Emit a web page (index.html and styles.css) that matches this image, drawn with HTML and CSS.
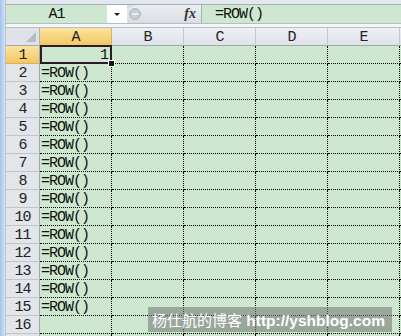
FILE: index.html
```html
<!DOCTYPE html>
<html lang="zh-CN">

<head>
    <title>ROW</title>
    <meta charset="UTF-8">
    <link rel="stylesheet" href="styles.css">
</head>

<body>
    <div class="window">
        <div class="frame-edge"></div>
        <div class="workbook">
            <div class="top-band"></div>
            <div class="formula-bar">
                <div class="name-box">A1</div>
                <div class="name-drop"><span class="caret"></span></div>
                <div class="bar-tools">
                    <span class="grip"><span class="grip-dot"></span></span>
                    <span class="fx">fx</span>
                </div>
                <div class="formula-input">=ROW()</div>
            </div>
            <div class="bar-gap"></div>

            <div class="sheet">
                <div class="corner"></div>
                <div class="col-head active">A</div>
                <div class="col-head">B</div>
                <div class="col-head">C</div>
                <div class="col-head">D</div>
                <div class="col-head">E</div>
                <div class="col-head rest"></div>

                <div class="row-head active">1</div>
                <div class="cell num selected">1</div>
                <div class="cell"></div><div class="cell"></div><div class="cell"></div><div class="cell"></div><div class="cell rest"></div>

                <div class="row-head">2</div>
                <div class="cell">=ROW()</div>
                <div class="cell"></div><div class="cell"></div><div class="cell"></div><div class="cell"></div><div class="cell rest"></div>

                <div class="row-head">3</div>
                <div class="cell">=ROW()</div>
                <div class="cell"></div><div class="cell"></div><div class="cell"></div><div class="cell"></div><div class="cell rest"></div>

                <div class="row-head">4</div>
                <div class="cell">=ROW()</div>
                <div class="cell"></div><div class="cell"></div><div class="cell"></div><div class="cell"></div><div class="cell rest"></div>

                <div class="row-head">5</div>
                <div class="cell">=ROW()</div>
                <div class="cell"></div><div class="cell"></div><div class="cell"></div><div class="cell"></div><div class="cell rest"></div>

                <div class="row-head">6</div>
                <div class="cell">=ROW()</div>
                <div class="cell"></div><div class="cell"></div><div class="cell"></div><div class="cell"></div><div class="cell rest"></div>

                <div class="row-head">7</div>
                <div class="cell">=ROW()</div>
                <div class="cell"></div><div class="cell"></div><div class="cell"></div><div class="cell"></div><div class="cell rest"></div>

                <div class="row-head">8</div>
                <div class="cell">=ROW()</div>
                <div class="cell"></div><div class="cell"></div><div class="cell"></div><div class="cell"></div><div class="cell rest"></div>

                <div class="row-head">9</div>
                <div class="cell">=ROW()</div>
                <div class="cell"></div><div class="cell"></div><div class="cell"></div><div class="cell"></div><div class="cell rest"></div>

                <div class="row-head">10</div>
                <div class="cell">=ROW()</div>
                <div class="cell"></div><div class="cell"></div><div class="cell"></div><div class="cell"></div><div class="cell rest"></div>

                <div class="row-head">11</div>
                <div class="cell">=ROW()</div>
                <div class="cell"></div><div class="cell"></div><div class="cell"></div><div class="cell"></div><div class="cell rest"></div>

                <div class="row-head">12</div>
                <div class="cell">=ROW()</div>
                <div class="cell"></div><div class="cell"></div><div class="cell"></div><div class="cell"></div><div class="cell rest"></div>

                <div class="row-head">13</div>
                <div class="cell">=ROW()</div>
                <div class="cell"></div><div class="cell"></div><div class="cell"></div><div class="cell"></div><div class="cell rest"></div>

                <div class="row-head">14</div>
                <div class="cell">=ROW()</div>
                <div class="cell"></div><div class="cell"></div><div class="cell"></div><div class="cell"></div><div class="cell rest"></div>

                <div class="row-head">15</div>
                <div class="cell">=ROW()</div>
                <div class="cell"></div><div class="cell"></div><div class="cell"></div><div class="cell"></div><div class="cell rest"></div>

                <div class="row-head">16</div>
                <div class="cell"></div>
                <div class="cell"></div><div class="cell"></div><div class="cell"></div><div class="cell"></div><div class="cell rest"></div>

                <div class="row-head"></div>
                <div class="cell"></div>
                <div class="cell"></div><div class="cell"></div><div class="cell"></div><div class="cell"></div><div class="cell rest"></div>
            </div>
        </div>

        <div class="watermark"><span class="wm-name">杨仕航的博客</span> <span class="wm-url">http://yshblog.com</span></div>
    </div>
</body>

</html>
```

FILE: styles.css
```css
body {
    margin: 0;
    overflow: hidden;
    background: #cde8cf;
    font-family: "Liberation Mono", "Courier New", monospace;
}

.window {
    position: relative;
    display: flex;
    width: 401px;
    height: 336px;
    overflow: hidden;
}

.frame-edge {
    width: 6px;
    flex: none;
    background: linear-gradient(to right, #a4c2ea, #d3e2f5);
    border-right: 1px solid #b6c3d3;
    box-sizing: border-box;
}

.workbook {
    flex: 1;
    min-width: 0;
}

.top-band {
    height: 4px;
    background: #e3e8ee;
}

.formula-bar {
    display: grid;
    grid-template-columns: 101px 20px 75px 1fr;
    height: 20px;
    border-top: 1px solid #a3acb7;
    border-bottom: 1px solid #b4bcc6;
    box-sizing: border-box;
    background: #cde8cf;
}

.name-box {
    text-align: center;
    padding-top: 2px;
    font-size: 15px;
    letter-spacing: -1px;
    line-height: 16px;
    color: #111;
}

.name-drop {
    background: #fff;
    display: flex;
    align-items: center;
    justify-content: center;
}

.caret {
    width: 0;
    height: 0;
    border-left: 3px solid transparent;
    border-right: 3px solid transparent;
    border-top: 3px solid #222;
}

.bar-tools {
    background: linear-gradient(#eceef1, #dadee4);
    border-right: 1px solid #a9b1bb;
    border-radius: 9px 0 0 9px;
    display: flex;
    align-items: center;
    justify-content: space-between;
    padding: 0 5px 0 2px;
    box-sizing: border-box;
}

.grip {
    width: 12px;
    height: 12px;
    border-radius: 50%;
    background: #c9ced6;
    border: 1px solid #b0b7c1;
    display: flex;
    align-items: center;
    justify-content: center;
    box-sizing: border-box;
}

.grip-dot {
    width: 6px;
    height: 2px;
    background: #eef0f3;
}

.fx {
    font-family: "Liberation Serif", serif;
    font-style: italic;
    font-weight: bold;
    font-size: 14px;
    color: #333;
}

.formula-input {
    padding: 2px 0 0 13px;
    font-size: 15px;
    letter-spacing: -1px;
    line-height: 16px;
    color: #111;
}

.bar-gap {
    height: 3px;
    background: #f4f6f8;
    border-bottom: 1px solid #b8bfc8;
}

.sheet {
    display: grid;
    grid-template-columns: 34px repeat(5, 72px) 1fr;
    grid-auto-rows: 18px;
    font-size: 15px;
    letter-spacing: -1px;
    color: #111;
}

.corner {
    position: relative;
    background: #dfe2e7;
    border-right: 1px solid #aab2bc;
    border-bottom: 1px solid #9ea7b2;
    box-sizing: border-box;
}

.corner::after {
    content: "";
    position: absolute;
    right: 3px;
    bottom: 3px;
    width: 0;
    height: 0;
    border-left: 10px solid transparent;
    border-bottom: 10px solid #b8bdc5;
}

.col-head {
    background: linear-gradient(#eef0f3, #dfe2e7);
    border-right: 1px solid #c3c9d1;
    border-bottom: 1px solid #9ea7b2;
    box-sizing: border-box;
    text-align: center;
    padding-top: 2px;
    line-height: 15px;
    color: #222;
}

.col-head.active {
    background: linear-gradient(#fbe39e, #f2c763);
    border-bottom-color: #c39a3c;
    border-right-color: #d9b25a;
}

.row-head {
    background: #e2e5ea;
    border-right: 1px solid #9ea7b2;
    border-bottom: 1px solid #bfc5cd;
    box-sizing: border-box;
    text-align: center;
    padding-top: 2px;
    line-height: 15px;
    color: #222;
}

.row-head.active {
    background: linear-gradient(#fbe39e, #f2c763);
    border-bottom-color: #d9b25a;
}

.cell {
    background: #cde8cf;
    border-right: 1px dotted #000;
    border-bottom: 1px dotted #000;
    box-sizing: border-box;
    padding: 2px 0 0 1px;
    line-height: 15px;
    white-space: nowrap;
}

.cell.rest,
.col-head.rest {
    border-right: none;
}

.cell.num {
    text-align: right;
    padding-right: 3px;
}

.cell.selected {
    position: relative;
}

.cell.selected::after {
    content: "";
    position: absolute;
    left: 0;
    top: -1px;
    right: -1px;
    bottom: -1px;
    border: 2px solid #2b1b2b;
}

.cell.selected::before {
    content: "";
    position: absolute;
    right: -4px;
    bottom: -4px;
    width: 5px;
    height: 5px;
    background: #1a141a;
    border: 1px solid #fff;
    z-index: 2;
}

.watermark {
    position: absolute;
    left: 148px;
    top: 307px;
    width: 244px;
    height: 25px;
    padding-left: 4px;
    box-sizing: border-box;
    background: rgba(122, 122, 122, 0.6);
    color: #fff;
    font-family: "Liberation Sans", "Noto Sans CJK SC", sans-serif;
    font-size: 15.5px;
    line-height: 25px;
    white-space: nowrap;
}

.wm-name {
    font-family: "Noto Sans CJK SC", sans-serif;
    font-size: 15px;
}

.wm-url {
    font-weight: bold;
}
```
